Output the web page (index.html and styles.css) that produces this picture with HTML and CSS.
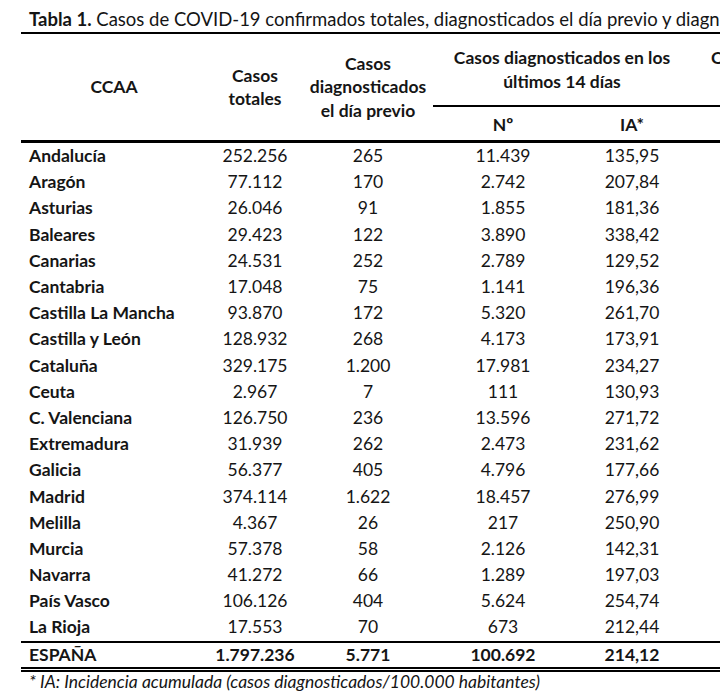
FILE: index.html
```html
<!DOCTYPE html>
<html lang="es">
<head>
<meta charset="utf-8">
<link rel="stylesheet" href="styles.css">
<title>Tabla 1</title>
</head>
<body>
<div class="page">
  <div class="title"><b>Tabla 1.</b> Casos de COVID-19 confirmados totales, diagnosticados el día previo y diagn</div>
  <table class="data">
    <colgroup>
      <col class="c1"><col class="c2"><col class="c3"><col class="c4"><col class="c5"><col class="c6"><col class="c7">
    </colgroup>
    <thead>
      <tr class="h1">
        <th rowspan="2">CCAA</th>
        <th rowspan="2">Casos<br>totales</th>
        <th rowspan="2">Casos<br>diagnosticados<br>el día previo</th>
        <th colspan="2" class="grp">Casos diagnosticados en los<br>últimos 14 días</th>
        <th colspan="2" class="grp next">C</th>
      </tr>
      <tr class="h2">
        <th class="sub">Nº</th>
        <th class="sub">IA*</th>
        <th class="sub"></th>
        <th class="sub"></th>
      </tr>
    </thead>
    <tbody>
      <tr><td>Andalucía</td><td>252.256</td><td>265</td><td>11.439</td><td>135,95</td><td></td><td></td></tr>
      <tr><td>Aragón</td><td>77.112</td><td>170</td><td>2.742</td><td>207,84</td><td></td><td></td></tr>
      <tr><td>Asturias</td><td>26.046</td><td>91</td><td>1.855</td><td>181,36</td><td></td><td></td></tr>
      <tr><td>Baleares</td><td>29.423</td><td>122</td><td>3.890</td><td>338,42</td><td></td><td></td></tr>
      <tr><td>Canarias</td><td>24.531</td><td>252</td><td>2.789</td><td>129,52</td><td></td><td></td></tr>
      <tr><td>Cantabria</td><td>17.048</td><td>75</td><td>1.141</td><td>196,36</td><td></td><td></td></tr>
      <tr><td>Castilla La Mancha</td><td>93.870</td><td>172</td><td>5.320</td><td>261,70</td><td></td><td></td></tr>
      <tr><td>Castilla y León</td><td>128.932</td><td>268</td><td>4.173</td><td>173,91</td><td></td><td></td></tr>
      <tr><td>Cataluña</td><td>329.175</td><td>1.200</td><td>17.981</td><td>234,27</td><td></td><td></td></tr>
      <tr><td>Ceuta</td><td>2.967</td><td>7</td><td>111</td><td>130,93</td><td></td><td></td></tr>
      <tr><td>C. Valenciana</td><td>126.750</td><td>236</td><td>13.596</td><td>271,72</td><td></td><td></td></tr>
      <tr><td>Extremadura</td><td>31.939</td><td>262</td><td>2.473</td><td>231,62</td><td></td><td></td></tr>
      <tr><td>Galicia</td><td>56.377</td><td>405</td><td>4.796</td><td>177,66</td><td></td><td></td></tr>
      <tr><td>Madrid</td><td>374.114</td><td>1.622</td><td>18.457</td><td>276,99</td><td></td><td></td></tr>
      <tr><td>Melilla</td><td>4.367</td><td>26</td><td>217</td><td>250,90</td><td></td><td></td></tr>
      <tr><td>Murcia</td><td>57.378</td><td>58</td><td>2.126</td><td>142,31</td><td></td><td></td></tr>
      <tr><td>Navarra</td><td>41.272</td><td>66</td><td>1.289</td><td>197,03</td><td></td><td></td></tr>
      <tr><td>País Vasco</td><td>106.126</td><td>404</td><td>5.624</td><td>254,74</td><td></td><td></td></tr>
      <tr><td>La Rioja</td><td>17.553</td><td>70</td><td>673</td><td>212,44</td><td></td><td></td></tr>
    </tbody>
    <tfoot>
      <tr class="total"><td>ESPAÑA</td><td>1.797.236</td><td>5.771</td><td>100.692</td><td>214,12</td><td></td><td></td></tr>
    </tfoot>
  </table>
  <p class="note">* IA: Incidencia acumulada (casos diagnosticados/100.000 habitantes)</p>
</div>
</body>
</html>
```

FILE: styles.css
```css
html, body {
  margin: 0;
  padding: 0;
  background: #fff;
}
body {
  width: 720px;
  height: 699px;
  overflow: hidden;
  font-family: Lato, "Open Sans", sans-serif;
  color: #151515;
}
.page {
  padding-left: 21px;
  padding-top: 8px;
  width: 699px;
  overflow: hidden;
}
.title {
  font-size: 18.5px;
  line-height: 22px;
  padding-left: 8px;
  padding-bottom: 2px;
  border-bottom: 2px solid #000;
  white-space: nowrap;
  width: 900px;
}
.data {
  border-collapse: collapse;
  table-layout: fixed;
  width: 900px;
  font-size: 17.5px;
}
.c1 { width: 186px; }
.c2 { width: 96px; }
.c3 { width: 130px; }
.c4 { width: 140px; }
.c5 { width: 118px; }
.c6 { width: 120px; }
.c7 { width: 110px; }
th {
  font-weight: 700;
  padding: 0;
  text-align: center;
  vertical-align: middle;
}
.h1 th {
  height: 71px;
  line-height: 23.5px;
}
.h1 th.grp {
  vertical-align: top;
  padding-top: 12px;
  height: 59px;
}
.h1 th.next {
  text-align: left;
  padding-left: 20px;
}
.h2 th {
  height: 31px;
  border-top: 2px solid #000;
  padding-top: 2px;
}
thead tr.h2 th, thead th[rowspan] {
  border-bottom: 3px solid #000;
}
td {
  padding: 0;
  height: 26.2px;
  text-align: center;
  vertical-align: middle;
  line-height: 20px;
}
tbody td:first-child, tfoot td:first-child {
  text-align: left;
  padding-left: 8px;
  font-weight: 700;
}
.total td {
  font-weight: 700;
  height: 24px;
  border-top: 2px solid #000;
  border-bottom: 5px double #000;
}
.note {
  margin: 0 0 0 8px;
  font-size: 17.5px;
  font-style: italic;
  line-height: 20px;
}
```
